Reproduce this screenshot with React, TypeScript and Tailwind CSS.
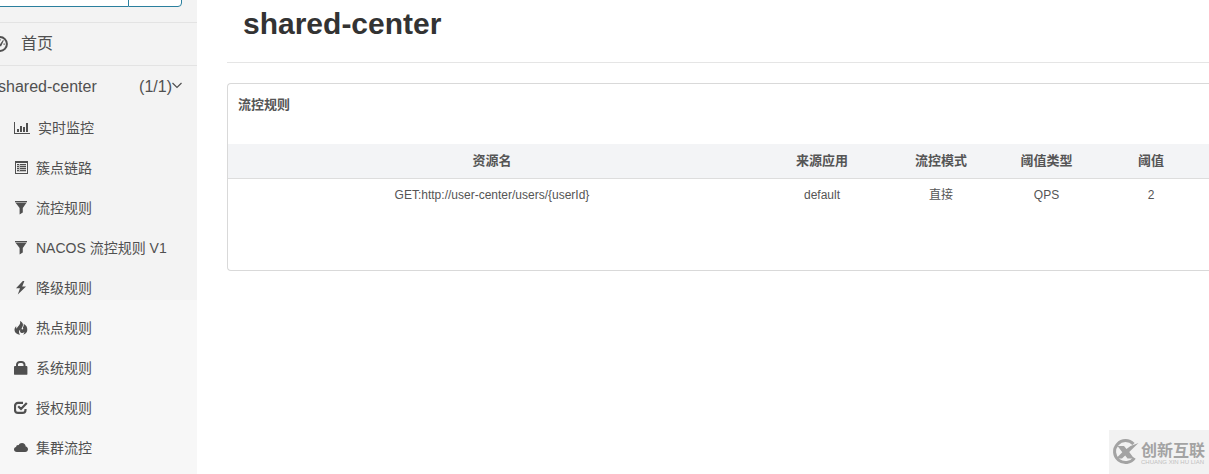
import React from 'react';

interface IconProps {
  className?: string;
  viewBox: string;
  children: React.ReactNode;
}

const Icon: React.FC<IconProps> = ({ className, viewBox, children }) => (
  <svg aria-hidden="true" viewBox={viewBox} fill="currentColor" className={className}>
    {children}
  </svg>
);

const StatsIcon = () => (
  <Icon viewBox="0 0 16 14" className="h-3.5 w-4">
    <path d="M0 1h1v11h15v1H0zM3 8h2v3H3zM6 5h2v6H6zM9 6h2v5H9zM12 2h2v9h-2z" />
  </Icon>
);

const ListIcon = () => (
  <Icon viewBox="0 0 14 14" className="size-3.5">
    <path
      fillRule="evenodd"
      d="M1 0h13v13H1zM2 2v10h11V2zM3 3h2v1H3zM6 3h6v1H6zM3 5h2v1H3zM6 5h6v1H6zM3 7h2v1H3zM6 7h6v1H6zM3 9h2v1H3zM6 9h6v1H6z"
    />
    <path d="M3 3h9v8H3z" opacity=".3" />
  </Icon>
);

const FilterIcon = () => (
  <Icon viewBox="0 0 14 14" className="size-3.5">
    <path d="M1 0h12v1.200H1zM1.500 1.700h11L8.800 7v4.500L5.600 13.500V7z" />
  </Icon>
);

const FlashIcon = () => (
  <Icon viewBox="0 0 14 14" className="size-3.5">
    <path d="M8.800 0 2 7.200h4L3.800 13.600 12 5.600H8.200L10.400 0z" />
  </Icon>
);

const FireIcon = () => (
  <Icon viewBox="0 0 14 14" className="size-3.5">
    <path d="M5.900 0c3.200 1.300 3.900 4.200 2.200 6.500-.8 1.100-.6 2 .1 2 1 0 1.300-1 .7-2.300.9-1 1-2.100.7-3.400 2.500 1.300 3.900 3.600 3.700 6.200-.2 2.500-1.700 4-4.200 4.700.9-.9 1.300-1.700 1.200-2.600-.8 1-2.300 1.300-3.300.6-1-.7-1.200-2-.7-3.300-1.100.9-1.500 2.100-1.200 3.300.1.700.5 1.400 1 2C2.900 13.200.7 11.600.5 9.200.4 7.600 1.100 6.300 2.200 5.200c-.1 1.100.1 1.900.6 2.500C3.100 6.300 4 5.500 4.900 4.400 6.300 3 6.500 1.600 5.900 0z" />
  </Icon>
);

const LockIcon = () => (
  <Icon viewBox="0 0 14 14" className="size-3.5">
    <path
      fillRule="evenodd"
      d="M2 5V3.800C2 1.500 3.700 0 6 0h1.500c2.300 0 4 1.500 4 3.800V5h1c.5 0 .9.4.9.900v7c0 .5-.4.900-.9.900H.9C.4 13.800 0 13.400 0 12.900v-7C0 5.400.4 5 .900 5zM4 5h5.500V3.900C9.500 2.700 8.700 2 7.600 2H5.900C4.800 2 4 2.700 4 3.900z"
    />
  </Icon>
);

const CheckIcon = () => (
  <Icon viewBox="0 0 14 14" className="size-3.5">
    <path
      d="M9 1.900H4A3 3 0 0 0 1 4.900v4A3 3 0 0 0 4 11.900h4.500A3 3 0 0 0 11.500 8.900V8M4.200 5.300 7 8 12.800 2"
      fill="none"
      stroke="currentColor"
      strokeWidth="2.200"
    />
  </Icon>
);

const CloudIcon = () => (
  <Icon viewBox="0 0 14 14" className="size-3.5">
    <path d="M2.800 11C1.200 11 0 9.900 0 8.500c0-1.300.9-2.300 2.100-2.500C2.100 4.900 3 4.100 4 4.100c.2 0 .4 0 .6.1C5.200 2.800 6.500 2 8 2c2 0 3.600 1.500 3.700 3.500C13 5.700 14 6.800 14 8.200c0 1.600-1.200 2.800-2.800 2.800z" />
  </Icon>
);

const DashboardIcon = () => (
  <Icon viewBox="0 0 16 16" className="size-4">
    <circle cx="8" cy="8" r="6.900" fill="none" stroke="currentColor" strokeWidth="2" />
    <path d="M7 9.500 11 4l.8.6L9 10.500zM3.500 7.500h1.300v1.300H3.500zM7.400 3.300h1.300v1.300H7.400zM11.500 7.500h1.300v1.300h-1.300zM4.600 4.600h1.300v1.300H4.600z" />
  </Icon>
);

const menuItems = [
  { label: '实时监控', icon: <StatsIcon /> },
  { label: '簇点链路', icon: <ListIcon /> },
  { label: '流控规则', icon: <FilterIcon /> },
  { label: 'NACOS 流控规则 V1', icon: <FilterIcon /> },
  { label: '降级规则', icon: <FlashIcon /> },
  { label: '热点规则', icon: <FireIcon /> },
  { label: '系统规则', icon: <LockIcon /> },
  { label: '授权规则', icon: <CheckIcon /> },
  { label: '集群流控', icon: <CloudIcon /> },
];

const rules = [
  {
    resource: 'GET:http://user-center/users/{userId}',
    origin: 'default',
    mode: '直接',
    type: 'QPS',
    threshold: 2,
  },
];

const Sidebar = () => (
  <aside className="-ml-4 w-[213px] shrink-0 bg-[linear-gradient(#f3f3f3_300px,#f7f7f7_300px)] text-[#505050]">
    {/* the search row is scrolled mostly out of view */}
    <form className="-mt-7 mr-[15px] flex h-[35px]">
      <input
        type="text"
        aria-label="应用名"
        className="w-36 border border-r-0 border-[#2a7f9e] bg-white px-3"
      />
      <button
        type="button"
        aria-label="搜索"
        className="flex-1 rounded-r border border-[#2a7f9e] bg-white"
      />
    </form>
    <nav className="mt-[15px]">
      <a
        href="#home"
        className="flex h-11 items-center gap-[13px] border-y border-[#e3e3e3] pl-2 text-base"
      >
        <DashboardIcon />
        首页
      </a>
      <a
        href="#shared-center"
        className="flex h-[42px] items-center pr-[15px] pl-3.5 text-base"
      >
        <span>shared-center</span>
        <span className="ml-auto">(1/1)</span>
        <svg aria-hidden="true" viewBox="0 0 10 10" className="mb-1 size-2.5">
          <path d="M.5 3 5 7.500 9.500 3" fill="none" stroke="currentColor" strokeWidth="1.200" />
        </svg>
      </a>
      <ul>
        {menuItems.map((item) => (
          <li key={item.label}>
            <a href="#rules" className="flex h-10 items-center gap-2 pl-[30px] text-sm">
              {item.icon}
              {item.label}
            </a>
          </li>
        ))}
      </ul>
    </nav>
  </aside>
);

const RuleTable = () => (
  <table className="mt-5 w-full table-fixed text-center text-xs">
    <colgroup>
      <col />
      <col className="w-[132px]" />
      <col className="w-[106px]" />
      <col className="w-[105px]" />
      <col className="w-[110px]" />
    </colgroup>
    <thead>
      <tr className="h-[34px] border-b border-[#ddd] bg-[#f3f4f6] text-[13px]">
        <th>资源名</th>
        <th>来源应用</th>
        <th>流控模式</th>
        <th>阈值类型</th>
        <th className="pr-1.5">阈值</th>
      </tr>
    </thead>
    <tbody>
      {rules.map((rule) => (
        <tr key={rule.resource} className="h-[34px]">
          <td>{rule.resource}</td>
          <td>{rule.origin}</td>
          <td>{rule.mode}</td>
          <td>{rule.type}</td>
          <td className="pr-1.5">{rule.threshold}</td>
        </tr>
      ))}
    </tbody>
  </table>
);

const Watermark = () => (
  <div className="fixed right-0 bottom-0 flex h-11 w-[100px] items-center gap-0.5 bg-[#f2f2f2] pl-0.5 text-[#a3a3a3]">
    <svg aria-hidden="true" viewBox="0 0 28 26" className="h-[26px] w-7 shrink-0">
      <path
        d="M22.500 5A11 11 0 1 0 23.500 19"
        fill="none"
        stroke="currentColor"
        strokeWidth="3"
      />
      <path
        d="M6.500 7h6.500l2.500 3 4-3 8-3-9.300 9 4.800 6.500h-6.500l-2.300-3-3.200 3H5l6.300-6.300z"
        fill="currentColor"
      />
    </svg>
    <div className="pt-1 whitespace-nowrap">
      <div className="text-base leading-4 font-bold">创新互联</div>
      <div className="text-[6px] leading-[7px] text-[#c0c0c0]">CHUANG XIN HU LIAN</div>
    </div>
  </div>
);

export default function App() {
  return (
    <div className="flex min-h-screen overflow-hidden bg-white font-['Liberation_Sans','Noto_Sans_CJK_SC',sans-serif]">
      <Sidebar />
      <main className="min-w-0 flex-1 pl-[30px]">
        <header className="border-b border-[#e5e5e5] pb-3.5 pl-4">
          <h1 className="text-[30px] leading-[48px] font-bold text-[#333]">shared-center</h1>
        </header>
        <section className="mt-5 rounded-l border-y border-l border-[#d9d9d9] pb-[58px] text-[#555]">
          <h2 className="px-2.5 pt-[11px] pb-[9px] text-[13px] leading-5 font-bold">流控规则</h2>
          <RuleTable />
        </section>
      </main>
      <Watermark />
    </div>
  );
}
